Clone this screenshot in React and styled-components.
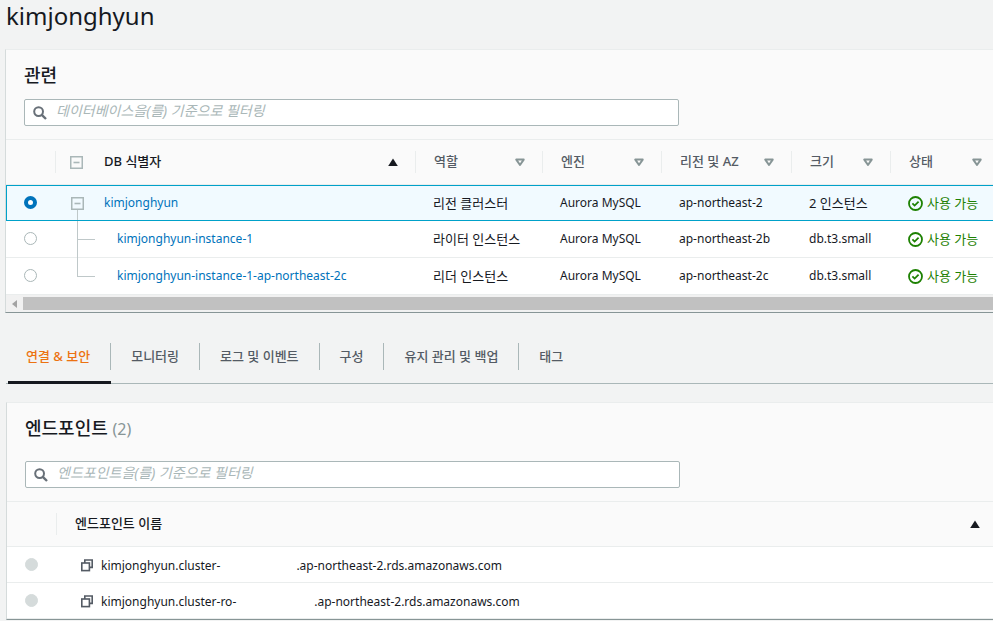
import React, { useState } from "react";
import styled, { createGlobalStyle, css } from "styled-components";

const GlobalStyle = createGlobalStyle`
  *, *::before, *::after { box-sizing: border-box; }
  body {
    margin: 0;
    background: #f2f3f3;
    color: #16191f;
    font: 12px/18px "Noto Sans", "Noto Sans CJK KR", sans-serif;
    overflow-x: hidden;
  }
  button, input { font: inherit; color: inherit; }
`;

const Page = styled.main`
  display: flex;
  flex-direction: column;
  padding-left: 5px;
`;

const Title = styled.h1`
  margin: 0 0 17px;
  padding-left: 1px;
  font-size: 24px;
  font-weight: 400;
  line-height: 32px;
`;

const Panel = styled.section`
  background: #fafafa;
  border-top: 1px solid #eaeded;
  border-left: 1px solid #d5dbdb;
  border-bottom: 1px solid #879596;
`;

const PanelHeader = styled.div`
  display: flex;
  flex-direction: column;
  gap: ${(p) => (p.$roomy ? 20 : 12)}px;
  padding: 13px 18px;
  border-bottom: 1px solid #eaeded;
`;

const PanelTitle = styled.h2`
  margin: 0;
  font-size: 18px;
  font-weight: 500;
  line-height: 24px;
`;

const Counter = styled.span`
  font-size: 16px;
  font-weight: 400;
  color: #879596;
`;

const SearchBox = styled.label`
  display: flex;
  align-items: center;
  gap: 9px;
  width: 100%;
  max-width: 655px;
  height: 27px;
  padding: 0 8px;
  background: #fff;
  border: 1px solid #aab7b8;
  border-radius: 2px;
`;

const SearchInput = styled.input`
  flex: 1;
  min-width: 0;
  height: 24px;
  padding: 0 0 4px;
  border: 0;
  outline: 0;
  background: transparent;
  font-size: 14px;
  &::placeholder { color: #aab7b8; font-style: italic; opacity: 1; }
`;

const Table = styled.table`
  width: 100%;
  table-layout: fixed;
  border-collapse: separate;
  border-spacing: 0;
  background: #fff;
`;

const Col = styled.col`
  width: ${(p) => (p.$width ? `${p.$width}px` : "auto")};
`;

const Th = styled.th`
  height: 45px;
  padding: 0;
  background: #fafafa;
  border-bottom: 1px solid #eaeded;
  text-align: left;
`;

const HeadCell = styled.div`
  display: flex;
  align-items: center;
  gap: 21px;
  height: 22px;
  padding: 0 ${(p) => p.$end ?? 17}px 0 ${(p) => p.$inset ?? 18}px;
  border-right: 1px solid ${(p) => (p.$end ? "transparent" : "#eaeded")};
`;

const SortButton = styled.button`
  flex: 1;
  display: flex;
  align-items: center;
  justify-content: space-between;
  padding: 0;
  border: 0;
  background: none;
  font-size: 13px;
  font-weight: 500;
  color: ${(p) => (p.$active ? "#16191f" : "#545b64")};
`;

const SortLabel = styled.span`
  padding-bottom: 2px;
`;

const Td = styled.td`
  position: relative;
  height: ${(p) => p.$height ?? 37}px;
  padding: 0 0 0 17px;
  border-bottom: 1px solid #eaeded;
  white-space: nowrap;
  &:first-child { padding-left: 18px; }
`;

const Row = styled.tr`
  ${(p) => p.$selected && css`
    ${Td} {
      height: 36px;
      background: #f1faff;
      border-top: 1px solid #00a1c9;
      border-bottom: 1px solid #00a1c9;
    }
    ${Td}:first-child {
      border-left: 1px solid #00a1c9;
      padding-left: 17px;
    }
  `}
`;

const Korean = styled.span`
  font-size: 13px;
`;

const Radio = styled.input.attrs({ type: "radio" })`
  appearance: none;
  display: block;
  width: 13px;
  height: 13px;
  margin: 0 0 2px;
  border: 1px solid #aab7b8;
  border-radius: 50%;
  background: #fff;
  &:checked { border: 4px solid #0073bb; }
  &:disabled { margin: 0; background: #d5dbdb; border-color: #d5dbdb; }
`;

const ToggleButton = styled.button`
  display: flex;
  padding: 0;
  border: 0;
  background: none;
`;

const TreeCell = styled(Td)`
  padding-left: ${(p) => (p.$level ? 61 : 15)}px;
`;

const TreeItem = styled.div`
  display: flex;
  align-items: center;
  gap: 20px;
`;

const Stem = styled.span`
  position: absolute;
  left: 21px;
  top: ${(p) => (p.$part === "root" ? "24px" : "0")};
  height: ${(p) => ({ root: "10px", middle: "37px", end: "19px" })[p.$part]};
  width: 1px;
  background: #bfc8c9;
`;

const Branch = styled.span`
  position: absolute;
  left: 21px;
  top: 18px;
  width: 18px;
  height: 1px;
  background: #bfc8c9;
`;

const Link = styled.a`
  color: #0073bb;
  text-decoration: none;
`;

const Status = styled.span`
  display: flex;
  align-items: center;
  gap: 4px;
  color: #1d8102;
`;

const ScrollTrack = styled.div`
  display: flex;
  align-items: center;
  height: 17px;
  background: #f1f1f1;
`;

const ScrollArrow = styled.button`
  display: flex;
  align-items: center;
  justify-content: center;
  width: 17px;
  height: 17px;
  padding: 0;
  border: 0;
  background: none;
`;

const ScrollThumb = styled.div`
  flex: 1;
  height: 13px;
  background: #c1c1c1;
`;

const TabLabel = styled.span`
  height: 27px;
  padding: 0 20px;
  border-right: 1px solid ${(p) => (p.$last ? "transparent" : "#aab7b8")};
`;

const Tab = styled.button`
  display: flex;
  height: 47px;
  padding: 6px 0 0;
  border: 0;
  border-bottom: 3px solid ${(p) => (p.$active ? "#16191f" : "transparent")};
  background: none;
  font-size: 13px;
  font-weight: 500;
  line-height: 26px;
  color: ${(p) => (p.$active ? "#ec7211" : "#545b64")};
  &:first-child ${TabLabel} { padding-left: 18px; }
`;

const TabList = styled.div`
  display: flex;
  height: 71px;
  margin: 0 0 18px 1px;
  padding: 24px 0 0 2px;
  border-bottom: 1px solid #aab7b8;
`;

const EndpointArea = styled.div`
  padding-left: 1px;
`;

const Endpoint = styled.div`
  display: flex;
  align-items: center;
  padding: 2px 0 0 7px;
`;

const CopyButton = styled.button`
  display: flex;
  margin-right: 8px;
  padding: 0;
  border: 0;
  background: none;
`;

const HiddenPart = styled.span`
  width: ${(p) => p.$width}px;
`;

const SearchIcon = () => (
  <svg width="14" height="14" viewBox="0 0 14 14" fill="none" stroke="#687078" strokeWidth="2" aria-hidden="true">
    <circle cx="5.6" cy="5.6" r="4.4" />
    <path d="M8.8 8.8 13 13" strokeWidth="2.4" />
  </svg>
);

const SortIcon = ({ active }) =>
  active ? (
    <svg width="10" height="9" viewBox="0 0 10 9" aria-hidden="true">
      <path d="M5 .6 9.8 8H.2Z" fill="#16191f" />
    </svg>
  ) : (
    <svg width="10" height="9" viewBox="0 0 10 9" fill="none" stroke="#879596" strokeWidth="2" strokeLinejoin="round" aria-hidden="true">
      <path d="M1.3 1.6h7.4L5 7Z" />
    </svg>
  );

const CollapseIcon = () => (
  <svg width="13" height="13" viewBox="0 0 13 13" aria-hidden="true">
    <rect x=".75" y=".75" width="11.5" height="11.5" fill="none" stroke="#aab7b8" strokeWidth="1.5" />
    <path d="M3.5 6.5h6" stroke="#aab7b8" strokeWidth="1.6" />
  </svg>
);

const CheckIcon = () => (
  <svg width="15" height="15" viewBox="0 0 15 15" fill="none" stroke="#1d8102" strokeWidth="1.8" aria-hidden="true">
    <circle cx="7.5" cy="7.5" r="6.5" />
    <path d="m4.4 7.4 2.2 2.2 4-3.9" />
  </svg>
);

const CopyIcon = () => (
  <svg width="12" height="13" viewBox="0 0 12 13" fill="none" stroke="#545b64" strokeWidth="1.6" aria-hidden="true">
    <path d="M3.8 4V1h7.4v7.4H8.5" />
    <rect x=".8" y="4" width="7.6" height="7.6" />
  </svg>
);

const COLUMNS = ["역할", "엔진", "리전 및 AZ", "크기", "상태"];
const DATABASES = [
  { name: "kimjonghyun", part: "root", role: "리전 클러스터", region: "ap-northeast-2", size: "2 인스턴스" },
  { name: "kimjonghyun-instance-1", part: "middle", role: "라이터 인스턴스", region: "ap-northeast-2b", size: "db.t3.small" },
  { name: "kimjonghyun-instance-1-ap-northeast-2c", part: "end", role: "리더 인스턴스", region: "ap-northeast-2c", size: "db.t3.small" },
];
const TABS = ["연결 & 보안", "모니터링", "로그 및 이벤트", "구성", "유지 관리 및 백업", "태그"];
const ENDPOINTS = [
  { prefix: "kimjonghyun.cluster-", gap: 76 },
  { prefix: "kimjonghyun.cluster-ro-", gap: 78 },
];

function Search({ placeholder }) {
  return (
    <SearchBox>
      <SearchIcon />
      <SearchInput type="text" placeholder={placeholder} aria-label={placeholder} />
    </SearchBox>
  );
}

function Sort({ label, active }) {
  return (
    <SortButton type="button" $active={active}>
      <SortLabel>{label}</SortLabel>
      <SortIcon active={active} />
    </SortButton>
  );
}

function RelatedPanel() {
  const [selected, setSelected] = useState(0);
  return (
    <Panel>
      <PanelHeader>
        <PanelTitle>관련</PanelTitle>
        <Search placeholder="데이터베이스을(를) 기준으로 필터링" />
      </PanelHeader>
      <Table>
        <colgroup>
          {[50, 360, 127, 119, 130, 99, 0].map((w, i) => <Col key={i} $width={w} />)}
        </colgroup>
        <thead>
          <tr>
            <Th><HeadCell /></Th>
            <Th aria-sort="ascending">
              <HeadCell $inset={14}>
                <ToggleButton type="button" aria-label="모두 접기"><CollapseIcon /></ToggleButton>
                <Sort label="DB 식별자" active />
              </HeadCell>
            </Th>
            {COLUMNS.map((label, i) => (
              <Th key={label}>
                <HeadCell $end={i === COLUMNS.length - 1 ? 10 : undefined}><Sort label={label} /></HeadCell>
              </Th>
            ))}
          </tr>
        </thead>
        <tbody>
          {DATABASES.map((db, i) => (
            <Row key={db.name} $selected={selected === i}>
              <Td>
                <Radio name="database" aria-label={db.name} checked={selected === i} onChange={() => setSelected(i)} />
              </Td>
              <TreeCell $level={i ? 1 : 0}>
                <Stem $part={db.part} />
                {i > 0 && <Branch />}
                <TreeItem>
                  {i === 0 && <ToggleButton type="button" aria-label="접기"><CollapseIcon /></ToggleButton>}
                  <Link href="#">{db.name}</Link>
                </TreeItem>
              </TreeCell>
              <Td><Korean>{db.role}</Korean></Td>
              <Td>Aurora MySQL</Td>
              <Td>{db.region}</Td>
              <Td>{i === 0 ? <Korean>{db.size}</Korean> : db.size}</Td>
              <Td><Status><CheckIcon /><Korean>사용 가능</Korean></Status></Td>
            </Row>
          ))}
        </tbody>
      </Table>
      <ScrollTrack>
        <ScrollArrow type="button" aria-label="왼쪽으로 스크롤">
          <svg width="5" height="8" viewBox="0 0 5 8" aria-hidden="true"><path d="M5 0v8L0 4Z" fill="#a3a3a3" /></svg>
        </ScrollArrow>
        <ScrollThumb />
      </ScrollTrack>
    </Panel>
  );
}

function EndpointPanel() {
  return (
    <Panel>
      <PanelHeader $roomy>
        <PanelTitle>엔드포인트 <Counter>(2)</Counter></PanelTitle>
        <Search placeholder="엔드포인트을(를) 기준으로 필터링" />
      </PanelHeader>
      <Table>
        <colgroup><Col $width={50} /><Col /></colgroup>
        <thead>
          <tr>
            <Th><HeadCell /></Th>
            <Th aria-sort="ascending"><HeadCell $end={12}><Sort label="엔드포인트 이름" active /></HeadCell></Th>
          </tr>
        </thead>
        <tbody>
          {ENDPOINTS.map((e) => (
            <Row key={e.prefix}>
              <Td $height={36}><Radio name="endpoint" disabled aria-label={e.prefix} /></Td>
              <Td $height={36}>
                <Endpoint>
                  <CopyButton type="button" aria-label="복사"><CopyIcon /></CopyButton>
                  {e.prefix}
                  <HiddenPart $width={e.gap} />
                  .ap-northeast-2.rds.amazonaws.com
                </Endpoint>
              </Td>
            </Row>
          ))}
        </tbody>
      </Table>
    </Panel>
  );
}

export default function App() {
  const [tab, setTab] = useState(0);
  return (
    <>
      <GlobalStyle />
      <Page>
        <Title>kimjonghyun</Title>
        <RelatedPanel />
        <TabList role="tablist">
          {TABS.map((label, i) => (
            <Tab key={label} type="button" role="tab" aria-selected={tab === i} $active={tab === i} onClick={() => setTab(i)}>
              <TabLabel $last={i === TABS.length - 1}>{label}</TabLabel>
            </Tab>
          ))}
        </TabList>
        <EndpointArea>
          <EndpointPanel />
        </EndpointArea>
      </Page>
    </>
  );
}
